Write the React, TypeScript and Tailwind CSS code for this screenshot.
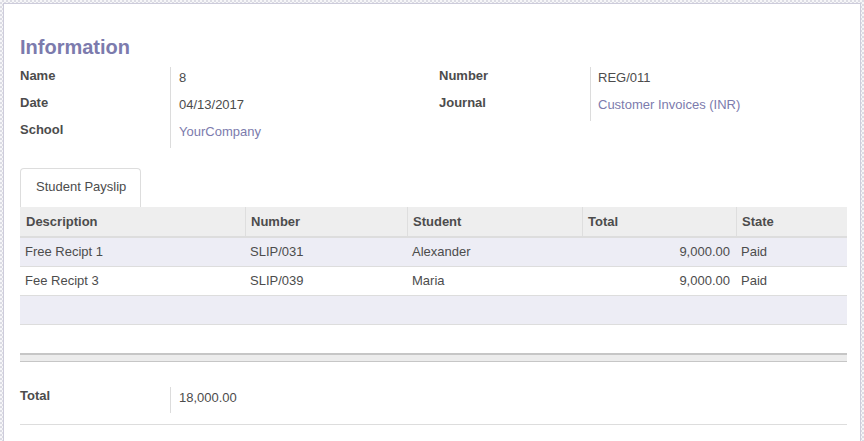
import React from "react";

const font = { fontFamily: '"Liberation Sans", Arial, sans-serif' };

function Field({ label, value, link }: { label: string; value: string; link?: boolean }) {
  return (
    <div className="flex h-[27px]">
      <div className="w-[150px] shrink-0 font-bold text-[13px] leading-[18px] text-[#4c4c4c]">{label}</div>
      <div
        className={`border-l border-[#dcdcdc] pl-[8px] pt-[2px] text-[13px] leading-[18px] ${
          link ? "text-[#7c7bad]" : "text-[#4c4c4c]"
        }`}
      >
        {value}
      </div>
    </div>
  );
}

function FieldRight({ label, value, link }: { label: string; value: string; link?: boolean }) {
  return (
    <div className="flex h-[27px]">
      <div className="w-[151px] shrink-0 font-bold text-[13px] leading-[18px] text-[#4c4c4c]">{label}</div>
      <div
        className={`border-l border-[#dcdcdc] pl-[7px] pt-[2px] text-[13px] leading-[18px] ${
          link ? "text-[#7c7bad]" : "text-[#4c4c4c]"
        }`}
      >
        {value}
      </div>
    </div>
  );
}

const cols = ["w-[225px]", "w-[162px]", "w-[175px]", "w-[154px]", "flex-1"];

export default function App() {
  const rows = [
    ["Free Recipt 1", "SLIP/031", "Alexander", "9,000.00", "Paid"],
    ["Fee Recipt 3", "SLIP/039", "Maria", "9,000.00", "Paid"],
  ];
  return (
    <div
      style={font}
      className="h-[441px] w-[864px] overflow-hidden bg-[repeating-conic-gradient(#dcdce4_0%_25%,#f6f6f8_0%_50%)] bg-[length:4px_4px] pt-[3px] pl-[3px] pr-[3px]"
    >
      <div className="h-[460px] border border-[#cdccdb] bg-white pl-[16px] pr-[13px] pt-[31px]">
        <div className="text-[20px] leading-[24px] font-bold text-[#7c7bad]">Information</div>
        <div className="mt-[8px] flex">
          <div className="w-[419px]">
            <Field label="Name" value="8" />
            <Field label="Date" value="04/13/2017" />
            <Field label="School" value="YourCompany" link />
          </div>
          <div>
            <FieldRight label="Number" value="REG/011" />
            <FieldRight label="Journal" value="Customer Invoices (INR)" link />
          </div>
        </div>

        <div className="mt-[20px] flex">
          <div className="w-[121px] h-[39px] rounded-t-[4px] border border-b-0 border-[#dddddd] pl-[15px] pt-[9px] text-[13px] leading-[18px] text-[#4c4c4c]">
            Student Payslip
          </div>
        </div>

        <div className="text-[13px] leading-[18px]">
          <div className="flex h-[31px] bg-[#eeeeee] border-b-2 border-[#dddddd] font-bold text-[#4c4c4c]">
            {["Description", "Number", "Student", "Total", "State"].map((h, i) => (
              <div
                key={h}
                className={`${cols[i]} flex items-center ${i > 0 ? "border-l border-[#dedede] pl-[5px]" : "pl-[6px]"}`}
              >
                {h}
              </div>
            ))}
          </div>
          {rows.map((r, ri) => (
            <div
              key={ri}
              className={`flex h-[29px] border-b border-[#dddddd] text-[#4c4c4c] ${
                ri % 2 === 0 ? "bg-[#ededf5]" : "bg-white"
              }`}
            >
              {r.map((c, i) => (
                <div
                  key={i}
                  className={`${cols[i]} flex items-center ${
                    i === 3 ? "justify-end pr-[6px] pl-[5px]" : "px-[5px]"
                  }`}
                >
                  {c}
                </div>
              ))}
            </div>
          ))}
          <div className="h-[29px] border-b border-[#dddddd] bg-[#ededf5]" />
        </div>

        <div className="mt-[28px] h-[9px] border-t-2 border-b border-[#c6c6c6] bg-[#ececec]" />

        <div className="mt-[25px] flex h-[26px]">
          <div className="w-[150px] shrink-0 pt-0 font-bold text-[13px] leading-[18px] text-[#4c4c4c]">Total</div>
          <div className="border-l border-[#dcdcdc] pl-[8px] pt-[2px] text-[13px] leading-[18px] text-[#4c4c4c]">
            18,000.00
          </div>
        </div>
        <div className="mt-[11px] border-b border-[#dddddd]" />
      </div>
    </div>
  );
}
